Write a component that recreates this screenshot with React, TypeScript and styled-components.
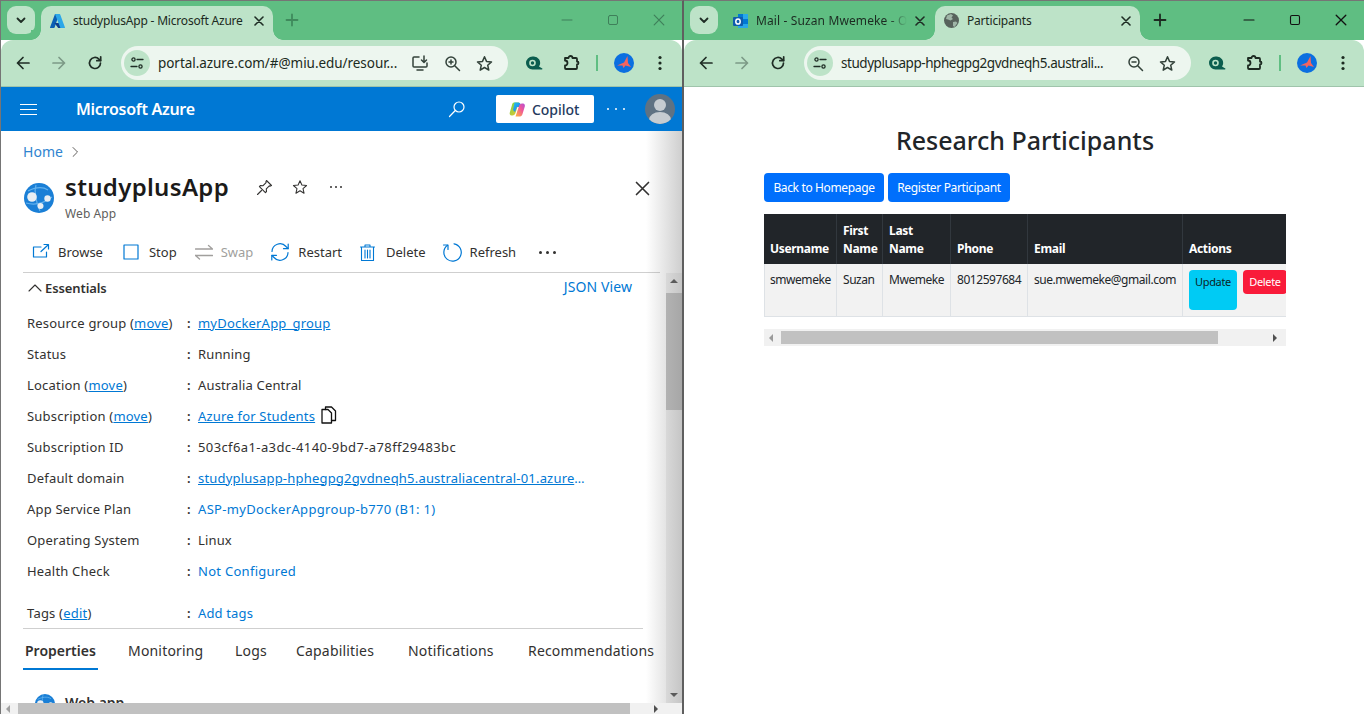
import React from 'react';
import styled, { createGlobalStyle } from 'styled-components';

const FONT = `"Noto Sans", "Open Sans", sans-serif`;

const Global = createGlobalStyle`
  html, body { margin: 0; padding: 0; overflow: hidden; background: #fff; }
  * { box-sizing: border-box; }
  body { font-family: ${FONT}; }
`;

const Screen = styled.div`
  width: 1364px;
  height: 714px;
  display: grid;
  grid-template-columns: 684px 680px;
  overflow: hidden;
`;

const Win = styled.div<{ $left?: boolean }>`
  display: flex;
  flex-direction: column;
  height: 714px;
  min-width: 0;
  border-top: 1px solid #757575;
  border-left: ${({ $left }) => ($left ? '1px solid #757575' : 'none')};
  border-right: ${({ $left }) => ($left ? '2px solid #5f5f5f' : 'none')};
`;

const TabStrip = styled.div`
  height: 39px;
  flex: none;
  background: #5fbe82;
  display: flex;
  align-items: flex-start;
  padding: 5px 0 0 6px;
`;

const TabMenu = styled.div`
  width: 28px;
  height: 28px;
  border-radius: 9px;
  background: #bde3c8;
  display: flex;
  align-items: center;
  justify-content: center;
  flex: none;
`;

const Tab = styled.div<{ $active?: boolean; $w: number; $ml: number }>`
  position: relative;
  width: ${({ $w }) => $w}px;
  height: 34px;
  margin-left: ${({ $ml }) => $ml}px;
  flex: none;
  display: flex;
  align-items: center;
  padding: 0 9px 5px 9px;
  gap: 8px;
  border-radius: 10px 10px 0 0;
  background: ${({ $active }) => ($active ? '#bde3c8' : 'transparent')};
  ${({ $active }) =>
    $active &&
    `
    &::before, &::after {
      content: '';
      position: absolute;
      bottom: 0;
      width: 10px;
      height: 10px;
      background: radial-gradient(circle at var(--cx) 0, #5fbe82 9.5px, #bde3c8 10px);
    }
    &::before { left: -10px; --cx: 0; }
    &::after { right: -10px; --cx: 100%; }
  `}
`;

const TabTitle = styled.span<{ $fade?: boolean }>`
  flex: 1;
  min-width: 0;
  font-size: 12px;
  color: #1c2a21;
  white-space: nowrap;
  overflow: hidden;
  letter-spacing: ${({ $fade }) => ($fade ? 0.12 : -0.2)}px;
  ${({ $fade }) =>
    $fade &&
    `-webkit-mask-image: linear-gradient(90deg, #000 88%, transparent 100%);
     mask-image: linear-gradient(90deg, #000 88%, transparent 100%);`}
`;

const NewTab = styled.div<{ $ml: number }>`
  width: 20px;
  height: 20px;
  margin: 4px 0 0 ${({ $ml }) => $ml}px;
  flex: none;
  display: flex;
  align-items: center;
  justify-content: center;
`;

const WinControls = styled.div`
  margin: -1px 0 0 auto;
  display: flex;
  flex: none;
`;

const WinBtn = styled.div`
  width: 46px;
  height: 30px;
  display: flex;
  align-items: center;
  justify-content: center;
`;

const Toolbar = styled.div`
  height: 47px;
  flex: none;
  background: #bde3c8;
  border-radius: 12px 12px 0 0;
  border-bottom: 1px solid #9fc4ab;
  display: flex;
  align-items: center;
  padding: 0 0 0 4px;
`;

const NavBtn = styled.div<{ $w?: number }>`
  width: ${({ $w }) => $w ?? 36}px;
  height: 32px;
  flex: none;
  display: flex;
  align-items: center;
  justify-content: center;
`;

const Omnibox = styled.div`
  width: 387px;
  height: 34px;
  margin: 0 8px 0 8px;
  flex: none;
  border-radius: 17px;
  background: #edf6ef;
  display: flex;
  align-items: center;
  padding: 0 8px 0 3px;
`;

const TuneWrap = styled.div`
  width: 26px;
  height: 26px;
  flex: none;
  border-radius: 50%;
  background: #bde3c8;
  display: flex;
  align-items: center;
  justify-content: center;
  margin-right: 8px;
`;

const Url = styled.span<{ $sp: number }>`
  flex: 1;
  min-width: 0;
  font-size: 13.5px;
  letter-spacing: ${({ $sp }) => $sp}px;
  color: #1c2a21;
  white-space: nowrap;
  overflow: hidden;
`;

const OmniIcon = styled.div`
  width: 32px;
  height: 28px;
  flex: none;
  display: flex;
  align-items: center;
  justify-content: center;
`;

const Divider = styled.div`
  width: 2px;
  height: 16px;
  flex: none;
  background: #5fbe82;
  margin: 0 8px 0 6px;
`;

/* Azure portal */
const Portal = styled.div`
  position: relative;
  flex: 1;
  min-height: 0;
  display: flex;
  flex-direction: column;
  background: #fff;
`;

const AzureBar = styled.div`
  height: 44px;
  flex: none;
  background: #0078d4;
  display: flex;
  align-items: center;
  color: #fff;
`;

const Burger = styled.div`
  width: 17px;
  height: 11px;
  margin-left: 19px;
  flex: none;
  border-top: 1px solid #fff;
  border-bottom: 1px solid #fff;
  display: flex;
  align-items: center;
  &::before { content: ''; display: block; width: 100%; height: 1px; background: #fff; }
`;

const Brand = styled.div`
  margin-left: 39px;
  font-size: 16px;
  font-weight: 600;
  letter-spacing: -0.28px;
  flex: 1;
`;

const Copilot = styled.div`
  width: 98px;
  height: 28px;
  margin: 0 13px 0 30px;
  background: #fff;
  border-radius: 2px;
  display: flex;
  align-items: center;
  gap: 6px;
  padding-left: 13px;
  font-size: 14px;
  font-weight: 500;
  color: #243a5e;
  letter-spacing: -0.05px;
`;

const BarDots = styled.div`
  width: 18px;
  flex: none;
  display: flex;
  justify-content: space-between;
  margin-right: 20px;
  & > i { width: 2px; height: 2px; border-radius: 50%; background: #fff; }
`;

const Avatar = styled.div`
  margin-right: 7px;
  width: 30px;
  height: 30px;
  flex: none;
`;

const PortalBody = styled.div`
  flex: 1;
  min-height: 0;
  display: flex;
  flex-direction: column;
  overflow: hidden;
`;

const Crumb = styled.div`
  height: 41px;
  flex: none;
  padding-left: 22px;
  display: flex;
  align-items: center;
  gap: 7px;
  font-size: 14px;
  letter-spacing: 0.05px;
  color: #2f84d0;
`;

const TitleRow = styled.div`
  height: 60px;
  flex: none;
  display: flex;
  align-items: flex-start;
  padding-left: 23px;
`;

const TitleIcon = styled.div`
  margin-top: 11px;
  width: 30px;
  flex: none;
`;

const TitleText = styled.div`
  margin: -1px 0 0 11px;
`;

const H = styled.div`
  font-size: 24px;
  line-height: 31px;
  font-weight: 600;
  color: #1b1a19;
  letter-spacing: 0.32px;
`;

const Sub = styled.div`
  font-size: 12px;
  line-height: 18px;
  margin-top: 3px;
  letter-spacing: 0.1px;
  color: #605e5c;
`;

const TitleActions = styled.div`
  display: flex;
  align-items: center;
  height: 32px;
  margin: -1px 0 0 27px;
  gap: 19px;
`;

const TitleDots = styled.div`
  width: 12px;
  margin-left: 3px;
  flex: none;
  display: flex;
  justify-content: space-between;
  & > i { width: 2px; height: 2px; border-radius: 50%; background: #323130; }
`;

const CloseBlade = styled.div`
  margin: 7px 31px 0 auto;
  width: 16px;
  height: 16px;
`;

const ActionBar = styled.div`
  height: 41px;
  flex: none;
  margin: 0 22px 0 22px;
  border-bottom: 1px solid #cfcfcf;
  display: flex;
  align-items: center;
`;

const Action = styled.div<{ $x: number; $gap: number; $off?: boolean }>`
  margin-left: ${({ $x }) => $x}px;
  display: flex;
  align-items: center;
  gap: ${({ $gap }) => $gap}px;
  font-size: 13px;
  color: ${({ $off }) => ($off ? '#a19f9d' : '#323130')};
  flex: none;
`;

const MoreDots = styled.div`
  width: 17px;
  display: flex;
  justify-content: space-between;
  & > i { width: 3px; height: 3px; border-radius: 50%; background: #323130; }
`;

const ScrollArea = styled.div`
  flex: 1;
  min-height: 0;
  overflow: hidden;
  padding: 0 0 0 22px;
`;

const EssHead = styled.div`
  height: 30px;
  display: flex;
  align-items: center;
  padding: 0 0 0 5px;
  width: 609px;
  gap: 3px;
  font-size: 13px;
  font-weight: 600;
  letter-spacing: -0.1px;
  color: #323130;
`;

const JsonLink = styled.span`
  margin: 0 0 3px auto;
  font-size: 14px;
  font-weight: 400;
  letter-spacing: 0.1px;
  color: #0078d4;
`;

const Rows = styled.div`
  margin-top: 4px;
  padding-left: 4px;
`;

const Row = styled.div<{ $h?: number; $mt?: number }>`
  display: grid;
  grid-template-columns: 160px 11px 1fr;
  align-items: center;
  height: ${({ $h }) => $h ?? 31}px;
  margin-top: ${({ $mt }) => $mt ?? 0}px;
  font-size: 13px;
  letter-spacing: 0.2px;
  color: #323130;
  white-space: nowrap;
`;

const Colon = styled.span`
  font-weight: 600;
`;

const A = styled.a`
  color: #0078d4;
  text-decoration: underline;
`;

const Plain = styled.span<{ $blue?: boolean; $sp?: number }>`
  color: ${({ $blue }) => ($blue ? '#0078d4' : '#323130')};
  letter-spacing: ${({ $sp }) => $sp ?? 0.15}px;
`;

const DomainLink = styled(A)`
  display: inline-block;
  vertical-align: bottom;
  max-width: 387px;
  overflow: hidden;
  text-overflow: ellipsis;
`;

const CopyIcon = styled.span`
  display: inline-flex;
  vertical-align: -3px;
  margin-left: 5px;
`;

const TabsRow = styled.div`
  width: 620px;
  border-top: 1px solid #cfcfcf;
  height: 42px;
  display: flex;
  align-items: flex-start;
  font-size: 14px;
  color: #323130;
  flex: none;
`;

const PTab = styled.div<{ $active?: boolean; $w: number }>`
  width: ${({ $w }) => $w}px;
  flex: none;
  height: 41px;
  padding: 12px 0 0 ${({ $active }) => ($active ? 2 : 0)}px;
  font-weight: ${({ $active }) => ($active ? 600 : 400)};
  letter-spacing: ${({ $active }) => ($active ? 0 : 0.18)}px;
  white-space: nowrap;
  color: #323130;
  border-bottom: ${({ $active }) => ($active ? '2px solid #0078d4' : 'none')};
`;

const WebApp = styled.div`
  margin: 24px 0 0 12px;
  display: flex;
  gap: 10px;
  align-items: flex-start;
  font-size: 14px;
  font-weight: 600;
  color: #323130;
  line-height: 18px;
`;

const Shade = styled.div`
  position: absolute;
  top: 44px;
  right: 0;
  bottom: 11px;
  width: 36px;
  pointer-events: none;
  background: linear-gradient(90deg, rgba(120,120,120,0), rgba(120,120,120,0.36));
`;

const VBar = styled.div`
  position: absolute;
  top: 186px;
  right: 0;
  bottom: 11px;
  width: 16px;
  background: #f1f1f1;
  display: flex;
  flex-direction: column;
  align-items: center;
  padding: 6px 0;
`;

const VThumb = styled.div`
  width: 16px;
  height: 117px;
  margin-top: 10px;
  background: #c1c1c1;
`;

const Spacer = styled.div`
  flex: 1;
`;

const Arrow = styled.i<{ $dir: 'up' | 'down' | 'left' | 'right'; $c?: string }>`
  display: block;
  width: 0;
  height: 0;
  flex: none;
  ${({ $dir, $c }) => {
    const c = $c ?? '#505050';
    if ($dir === 'up') return `border-left:4px solid transparent;border-right:4px solid transparent;border-bottom:4px solid ${c};`;
    if ($dir === 'down') return `border-left:4px solid transparent;border-right:4px solid transparent;border-top:4px solid ${c};`;
    if ($dir === 'left') return `border-top:4px solid transparent;border-bottom:4px solid transparent;border-right:4px solid ${c};`;
    return `border-top:4px solid transparent;border-bottom:4px solid transparent;border-left:4px solid ${c};`;
  }}
`;

const HBar = styled.div`
  height: 11px;
  flex: none;
  background: #f1f1f1;
  display: flex;
  align-items: center;
  padding-left: 5px;
  position: relative;
  z-index: 1;
`;

const HThumb = styled.div<{ $w: number; $ml: number; $mr: number; $h: number }>`
  width: ${({ $w }) => $w}px;
  height: ${({ $h }) => $h}px;
  margin: 0 ${({ $mr }) => $mr}px 0 ${({ $ml }) => $ml}px;
  background: #c1c1c1;
  flex: none;
`;

/* Participants page */
const Page = styled.div`
  flex: 1;
  min-height: 0;
  background: #fff;
  padding: 0 0 0 80px;
`;

const PageTitle = styled.h1`
  width: 522px;
  margin: 0;
  padding-top: 33px;
  height: 86px;
  font-size: 25px;
  line-height: 40px;
  font-weight: 500;
  text-align: center;
  color: #212529;
`;

const BtnRow = styled.div`
  display: flex;
  gap: 4px;
`;

const Btn = styled.button<{ $bg: string; $fg?: string; $w: number; $h: number }>`
  width: ${({ $w }) => $w}px;
  height: ${({ $h }) => $h}px;
  flex: none;
  padding: 0;
  border: none;
  border-radius: 4px;
  background: ${({ $bg }) => $bg};
  color: ${({ $fg }) => $fg ?? '#fff'};
  font-family: ${FONT};
  font-size: 12px;
  letter-spacing: -0.36px;
  white-space: nowrap;
`;

const TableWrap = styled.div`
  width: 522px;
  margin-top: 12px;
  overflow: hidden;
`;

const Table = styled.table`
  border-collapse: collapse;
  table-layout: fixed;
  width: 530px;
  font-size: 12px;
  line-height: 18px;
`;

const Th = styled.th<{ $w: number }>`
  width: ${({ $w }) => $w}px;
  background: #212529;
  color: #fff;
  font-weight: 700;
  text-align: left;
  vertical-align: bottom;
  padding: 7px 6px 6px;
  height: 50px;
  border: 1px solid #32383e;
  border-width: 0 1px 0 0;
  letter-spacing: -0.32px;
  &:first-child { border-left: 1px solid #212529; padding-left: 5px; }
`;

const Td = styled.td`
  background: #f2f2f2;
  color: #212529;
  vertical-align: top;
  padding: 7px 6px 6px;
  height: 52px;
  border: 1px solid #dee2e6;
  border-width: 0 1px 1px 0;
  white-space: nowrap;
  letter-spacing: -0.45px;
  &:first-child { border-left-width: 1px; padding-left: 5px; }
`;

const ActionCell = styled.div`
  display: flex;
  gap: 6px;
  align-items: flex-start;
  margin-top: -1px;
`;

const SmallBtn = styled(Btn)`
  font-size: 11px;
  display: flex;
  justify-content: center;
  padding-top: 3px;
  line-height: 18px;
`;

const TableScroll = styled.div`
  width: 522px;
  height: 17px;
  margin-top: 12px;
  background: #f1f1f1;
  display: flex;
  align-items: center;
  padding-left: 5px;
`;

/* Drawings */
const Stroke = ({ size = 16, color = '#1f2d25', w = 1.7, box = 16, children }: { size?: number; color?: string; w?: number; box?: number; children: React.ReactNode }) => (
  <svg width={size} height={size} viewBox={`0 0 ${box} ${box}`} fill="none" stroke={color} strokeWidth={w} strokeLinecap="round" strokeLinejoin="round">
    {children}
  </svg>
);

const Chevron = () => (
  <Stroke size={12} box={12} w={1.8}><path d="M2.5 4.5 6 8l3.5-3.5" /></Stroke>
);
const X = ({ color = '#1f2d25', size = 10, w = 1.6 }: { color?: string; size?: number; w?: number }) => (
  <Stroke size={size} box={10} color={color} w={w}><path d="M1 1l8 8M9 1l-8 8" /></Stroke>
);
const Plus = ({ color }: { color: string }) => (
  <Stroke size={14} box={14} color={color} w={1.8}><path d="M7 1.5v11M1.5 7h11" /></Stroke>
);
const Back = ({ color = '#1f2d25' }: { color?: string }) => (
  <Stroke color={color}><path d="M14 8H2.5M8 2.5 2.5 8 8 13.5" /></Stroke>
);
const Forward = ({ color = '#7c9a86' }: { color?: string }) => (
  <Stroke color={color}><path d="M2 8h11.5M8 2.5 13.5 8 8 13.5" /></Stroke>
);
const Reload = () => (
  <Stroke><path d="M13.5 8a5.5 5.5 0 1 1-1.6-3.9L13.5 5.5" /><path d="M13.7 1.8v3.9H9.8" /></Stroke>
);
const Tune = () => (
  <Stroke size={14} box={14} w={1.3}>
    <circle cx="3.5" cy="3.5" r="1.6" /><path d="M7 3.5h6M1 10.5h6" /><circle cx="10.5" cy="10.5" r="1.6" />
  </Stroke>
);
const Install = () => (
  <Stroke size={18} box={18} w={1.5} color="#33423a">
    <path d="M8 3H3a1 1 0 0 0-1 1v8a1 1 0 0 0 1 1h12a1 1 0 0 0 1-1V9" /><path d="M6 16h6M13 2v6M10.5 6 13 8.5 15.5 6" />
  </Stroke>
);
const Zoom = () => (
  <Stroke size={17} box={17} w={1.5} color="#33423a">
    <circle cx="7" cy="7" r="5" /><path d="M11 11l4.5 4.5M5 7h4M7 5v4" />
  </Stroke>
);
const ZoomOut = () => (
  <Stroke size={17} box={17} w={1.5} color="#33423a">
    <circle cx="7" cy="7" r="5" /><path d="M11 11l4.5 4.5M5 7h4" />
  </Stroke>
);
const Star = ({ color = '#33423a', size = 17, w = 1.5 }: { color?: string; size?: number; w?: number }) => (
  <Stroke size={size} box={17} w={w} color={color}>
    <path d="M8.5 1.8 10.5 6.4l5 .5-3.8 3.3 1.1 4.9-4.3-2.6-4.3 2.6 1.1-4.9L1.5 6.9l5-.5z" />
  </Stroke>
);
const ExtCam = () => (
  <svg width="18" height="14" viewBox="0 0 18 14">
    <path d="M7.500 0.500a6.500 6.500 0 1 0 0 13h9.500a.6.6 0 0 0 .3-1L14 10.500A6.500 6.500 0 0 0 7.500 0.500z" fill="#0b5d4e" />
    <circle cx="7.500" cy="7" r="3.300" fill="#bde3c8" />
    <circle cx="7.500" cy="7" r="1.700" fill="#0b5d4e" />
  </svg>
);
const Puzzle = () => (
  <svg width="17" height="16" viewBox="0 0 17 16" fill="none" stroke="#1c2a21" strokeWidth="1.800" strokeLinejoin="round">
    <path d="M2 3h3.500a2 2 0 0 1 4 0H13a1 1 0 0 1 1 1v2.500a1.500 1.500 0 0 1 0 3V13a1 1 0 0 1-1 1H3a1 1 0 0 1-1-1v-2.500a2.500 2.500 0 0 0 0-5z" />
  </svg>
);
const Profile = () => (
  <svg width="20" height="20" viewBox="0 0 20 20">
    <circle cx="10" cy="10" r="10" fill="#0b6fe0" />
    <path d="M3 12.500 10 9.500 13.500 3l.5 7 3 4-5.500-1.500L9.500 15l-1-2.500z" fill="#f3645f" />
  </svg>
);
const Kebab = () => (
  <svg width="4" height="16" viewBox="0 0 4 16" fill="#1c2a21">
    <circle cx="2" cy="2.500" r="1.600" /><circle cx="2" cy="8" r="1.600" /><circle cx="2" cy="13.500" r="1.600" />
  </svg>
);
const AzureLogo = () => (
  <svg width="15" height="14" viewBox="0 0 15 14">
    <path d="M5 0h4.200L4.600 13.500a.7.700 0 0 1-.6.500H.6a.5.500 0 0 1-.5-.7z" fill="#0a5fb4" />
    <path d="M11.200 9H4.400l3.800 5h4.600z" fill="#0f3f8c" />
    <path d="M5 0h4.600a.7.700 0 0 1 .6.500l4.700 12.800a.5.500 0 0 1-.5.700h-4z" fill="#2ba7e8" />
  </svg>
);
const OutlookLogo = () => (
  <svg width="15" height="16" viewBox="0 0 15 16">
    <rect x="5" y="1" width="10" height="14" fill="#28a8ea" />
    <rect x="5" y="1" width="5" height="5" fill="#0078d4" />
    <rect x="10" y="6" width="5" height="5" fill="#0078d4" />
    <rect x="0" y="4" width="10" height="9" rx="1" fill="#0f5cad" />
    <ellipse cx="5" cy="8.500" rx="2.200" ry="2.600" fill="none" stroke="#fff" strokeWidth="1.500" />
  </svg>
);
const GlobeIcon = () => (
  <svg width="15" height="15" viewBox="0 0 15 15">
    <circle cx="7.500" cy="7.500" r="7.500" fill="#57635c" />
    <path d="M3 2.500 7 1l2 1.500L7.500 4.500 9 6 6.500 7.500 4 6.500 2 6zM9 9l3-.5 1.500 1.500-3 4-1.500-1z" fill="#9fb6a7" />
  </svg>
);
const Search = () => (
  <Stroke size={18} box={18} color="#fff" w={1.2}>
    <circle cx="11" cy="7" r="5" /><path d="M7.300 10.500 1.500 16.500" />
  </Stroke>
);
const CopilotIcon = () => (
  <svg width="17" height="17" viewBox="0 0 17 17">
    <defs>
      <linearGradient id="cpa" x1="0" y1="0" x2="1" y2="1"><stop offset="0" stopColor="#19c3f0" /><stop offset="1" stopColor="#2d6be4" /></linearGradient>
      <linearGradient id="cpb" x1="0" y1="1" x2="1" y2="0"><stop offset="0" stopColor="#ffb638" /><stop offset=".6" stopColor="#f0569a" /><stop offset="1" stopColor="#b04fd6" /></linearGradient>
      <linearGradient id="cpc" x1="0" y1="0" x2="1" y2="1"><stop offset="0" stopColor="#6fd34b" /><stop offset="1" stopColor="#f5c62e" /></linearGradient>
    </defs>
    <path d="M5 1.500h5L6.500 12c-.5 1.500-1.500 2.500-3 2.500H2.500C1 14.500.300 13 .800 11.500L3 4c.3-1.500 1-2.500 2-2.500z" fill="url(#cpc)" />
    <path d="M5.500 1.500h4c1 0 2 .8 2.200 2L12.500 6H8L6 11 4 9l1-5z" fill="url(#cpa)" />
    <path d="M11 15.500H6.500L10 5c.5-1.500 1.500-2.500 3-2.500h1c1.500 0 2.200 1.500 1.800 3L13.500 13c-.4 1.500-1.300 2.500-2.500 2.500z" fill="url(#cpb)" />
  </svg>
);
const AvatarIcon = () => (
  <svg width="30" height="30" viewBox="0 0 30 30">
    <defs><clipPath id="av"><circle cx="15" cy="15" r="15" /></clipPath></defs>
    <circle cx="15" cy="15" r="15" fill="#5f7283" />
    <g clipPath="url(#av)" fill="#c6ccd1">
      <circle cx="15" cy="11" r="6" />
      <ellipse cx="15" cy="26" rx="11" ry="8" />
    </g>
  </svg>
);
const WebAppIcon = ({ size = 30 }: { size?: number }) => (
  <svg width={size} height={size} viewBox="0 0 30 30">
    <circle cx="15" cy="15" r="15" fill="#1a7fd6" />
    <path d="M4 8c6-3 14-5 20-1M12 2c-2 6-1 14 4 26M2 20c7 2 17 1 26-6" stroke="#63b2ee" strokeWidth="1.200" fill="none" />
    <circle cx="8" cy="14" r="4.800" fill="#e8eef3" />
    <circle cx="23.500" cy="15.500" r="3.200" fill="#e8eef3" />
    <circle cx="16.500" cy="23" r="3" fill="#e8eef3" />
  </svg>
);
const Pin = () => (
  <Stroke size={17} box={17} color="#323130" w={1.100}>
    <path d="M10.500 1.500l5 5-1.200.6-1-.2-3 3 .2 2.600-1.100 1.100-6-6 1.100-1.100 2.600.2 3-3-.2-1z" /><path d="M5.500 11.500 1.500 15.500" />
  </Stroke>
);
const BrowseIcon = () => (
  <Stroke size={18} box={18} color="#0078d4" w={1.200}>
    <path d="M9 4H1.500v10h13V9" /><path d="M9 8.500 16 2M12 1.500h4.500V6" />
  </Stroke>
);
const SwapIcon = () => (
  <Stroke size={18} box={18} color="#a19f9d" w={1.300}>
    <path d="M0.500 6h17M13.500 2.500 17.500 6M0.500 12.500h17M4.500 16 .5 12.500" />
  </Stroke>
);
const RestartIcon = () => (
  <Stroke size={20} box={20} color="#0078d4" w={1.200}>
    <path d="M2 9.500a8 8 0 0 1 14-5l2 2M18 10.500a8 8 0 0 1-14 5l-2-2" /><path d="M18.200 2v4.700h-4.700M1.800 18v-4.700h4.700" />
  </Stroke>
);
const TrashIcon = () => (
  <Stroke size={17} box={17} color="#0078d4" w={1.100}>
    <path d="M1.500 3h14M6 3V1h5v2M2.500 3v13.500h12V3M6 6v8M8.500 6v8M11 6v8" />
  </Stroke>
);
const RefreshIcon = () => (
  <Stroke size={20} box={20} color="#0078d4" w={1.200}>
    <path d="M5.500 3.300A8.700 8.700 0 1 0 12 1.800" /><path d="M6 7.500V3H1.500" />
  </Stroke>
);
const CopyDraw = () => (
  <Stroke size={18} box={18} color="#111" w={1.300}>
    <path d="M5.500 3.500V1h6l4 4v9.500h-4" /><path d="M2 3.500h6l3.500 3.500v10H2z" />
  </Stroke>
);
const UpChevron = () => (
  <Stroke size={14} box={14} color="#323130" w={1.100}><path d="M1 10 7 4l6 6" /></Stroke>
);
const CrumbChevron = () => (
  <Stroke size={10} box={10} color="#605e5c" w={1}><path d="M3 0.500 7.500 5 3 9.500" /></Stroke>
);

const ToolbarRight = () => (
  <>
    <NavBtn $w={36}><ExtCam /></NavBtn>
    <NavBtn $w={38}><Puzzle /></NavBtn>
    <Divider />
    <NavBtn $w={36}><Profile /></NavBtn>
    <NavBtn $w={36}><Kebab /></NavBtn>
  </>
);

const App: React.FC = () => (
  <>
    <Global />
    <Screen>
      <Win $left>
        <TabStrip>
          <TabMenu><Chevron /></TabMenu>
          <Tab $active $w={232} $ml={6}>
            <AzureLogo />
            <TabTitle>studyplusApp - Microsoft Azure</TabTitle>
            <X />
          </Tab>
          <NewTab $ml={9}><Plus color="#3f8a5c" /></NewTab>
          <WinControls>
            <WinBtn><Stroke size={12} box={12} color="#3f7f5a" w={1}><path d="M1 6h10" /></Stroke></WinBtn>
            <WinBtn><Stroke size={12} box={12} color="#3f7f5a" w={1}><rect x="1.500" y="1.500" width="9" height="9" rx="1.500" /></Stroke></WinBtn>
            <WinBtn><X color="#3f7f5a" size={12} w={1} /></WinBtn>
          </WinControls>
        </TabStrip>
        <Toolbar>
          <NavBtn><Back /></NavBtn>
          <NavBtn><Forward /></NavBtn>
          <NavBtn><Reload /></NavBtn>
          <Omnibox>
            <TuneWrap><Tune /></TuneWrap>
            <Url $sp={-0.05}>portal.azure.com/#@miu.edu/resour...</Url>
            <OmniIcon><Install /></OmniIcon>
            <OmniIcon><Zoom /></OmniIcon>
            <OmniIcon><Star /></OmniIcon>
          </Omnibox>
          <ToolbarRight />
        </Toolbar>
        <Portal>
          <AzureBar>
            <Burger />
            <Brand>Microsoft Azure</Brand>
            <Search />
            <Copilot><CopilotIcon />Copilot</Copilot>
            <BarDots><i /><i /><i /></BarDots>
            <Avatar><AvatarIcon /></Avatar>
          </AzureBar>
          <PortalBody>
            <Crumb>Home <CrumbChevron /></Crumb>
            <TitleRow>
              <TitleIcon><WebAppIcon /></TitleIcon>
              <TitleText>
                <H>studyplusApp</H>
                <Sub>Web App</Sub>
              </TitleText>
              <TitleActions>
                <Pin />
                <Star color="#323130" size={16} w={1.100} />
                <TitleDots><i /><i /><i /></TitleDots>
              </TitleActions>
              <CloseBlade><X color="#323130" size={15} w={1.100} /></CloseBlade>
            </TitleRow>
            <ActionBar>
              <Action $x={9} $gap={8}><BrowseIcon />Browse</Action>
              <Action $x={20} $gap={10}>
                <Stroke size={16} box={16} color="#0078d4" w={1.200}><rect x="1" y="1" width="14" height="14" /></Stroke>
                Stop
              </Action>
              <Action $x={18} $gap={8} $off><SwapIcon />Swap</Action>
              <Action $x={17} $gap={8}><RestartIcon />Restart</Action>
              <Action $x={17} $gap={10}><TrashIcon />Delete</Action>
              <Action $x={16} $gap={8}><RefreshIcon />Refresh</Action>
              <Action $x={23} $gap={0}><MoreDots><i /><i /><i /></MoreDots></Action>
            </ActionBar>
            <ScrollArea>
              <EssHead>
                <UpChevron />Essentials
                <JsonLink>JSON View</JsonLink>
              </EssHead>
              <Rows>
                <Row><span>Resource group (<A>move</A>)</span><Colon>:</Colon><span><A>myDockerApp_group</A></span></Row>
                <Row><span>Status</span><Colon>:</Colon><Plain>Running</Plain></Row>
                <Row><span>Location (<A>move</A>)</span><Colon>:</Colon><Plain>Australia Central</Plain></Row>
                <Row><span>Subscription (<A>move</A>)</span><Colon>:</Colon><span><A>Azure for Students</A><CopyIcon><CopyDraw /></CopyIcon></span></Row>
                <Row><span>Subscription ID</span><Colon>:</Colon><Plain $sp={0.39}>503cf6a1-a3dc-4140-9bd7-a78ff29483bc</Plain></Row>
                <Row><span>Default domain</span><Colon>:</Colon><span><DomainLink>studyplusapp-hphegpg2gvdneqh5.australiacentral-01.azurewebsites.net</DomainLink></span></Row>
                <Row><span>App Service Plan</span><Colon>:</Colon><Plain $blue $sp={0.33}>ASP-myDockerAppgroup-b770 (B1: 1)</Plain></Row>
                <Row><span>Operating System</span><Colon>:</Colon><Plain>Linux</Plain></Row>
                <Row><span>Health Check</span><Colon>:</Colon><Plain $blue $sp={0.28}>Not Configured</Plain></Row>
                <Row $mt={12} $h={30}><span>Tags (<A>edit</A>)</span><Colon>:</Colon><Plain $blue>Add tags</Plain></Row>
              </Rows>
              <TabsRow>
                <PTab $active $w={75}>Properties</PTab>
                <PTab $w={30} />
                <PTab $w={107}>Monitoring</PTab>
                <PTab $w={61}>Logs</PTab>
                <PTab $w={112}>Capabilities</PTab>
                <PTab $w={120}>Notifications</PTab>
                <PTab $w={126}>Recommendations</PTab>
              </TabsRow>
              <WebApp><WebAppIcon size={20} />Web app</WebApp>
            </ScrollArea>
          </PortalBody>
          <HBar>
            <Arrow $dir="left" $c="#a0a0a0" />
            <HThumb $w={612} $ml={8} $mr={24} $h={11} />
            <Arrow $dir="right" />
          </HBar>
          <VBar>
            <Arrow $dir="up" />
            <VThumb />
            <Spacer />
            <Arrow $dir="down" />
          </VBar>
          <Shade />
        </Portal>
      </Win>
      <Win>
        <TabStrip>
          <TabMenu><Chevron /></TabMenu>
          <Tab $w={210} $ml={6}>
            <OutlookLogo />
            <TabTitle $fade>Mail - Suzan Mwemeke - Outlook</TabTitle>
            <X />
          </Tab>
          <Tab $active $w={205} $ml={1}>
            <GlobeIcon />
            <TabTitle>Participants</TabTitle>
            <X />
          </Tab>
          <NewTab $ml={10}><Plus color="#1c2a21" /></NewTab>
          <WinControls>
            <WinBtn><Stroke size={12} box={12} color="#111" w={1.100}><path d="M1 6h10" /></Stroke></WinBtn>
            <WinBtn><Stroke size={12} box={12} color="#111" w={1.100}><rect x="1.500" y="1.500" width="9" height="9" rx="1.500" /></Stroke></WinBtn>
            <WinBtn><X color="#111" size={12} w={1.100} /></WinBtn>
          </WinControls>
        </TabStrip>
        <Toolbar>
          <NavBtn><Back /></NavBtn>
          <NavBtn><Forward /></NavBtn>
          <NavBtn><Reload /></NavBtn>
          <Omnibox>
            <TuneWrap><Tune /></TuneWrap>
            <Url $sp={-0.45}>studyplusapp-hphegpg2gvdneqh5.australi...</Url>
            <OmniIcon><ZoomOut /></OmniIcon>
            <OmniIcon><Star /></OmniIcon>
          </Omnibox>
          <ToolbarRight />
        </Toolbar>
        <Page>
          <PageTitle>Research Participants</PageTitle>
          <BtnRow>
            <Btn $bg="#006ffc" $w={120} $h={29}>Back to Homepage</Btn>
            <Btn $bg="#006ffc" $w={122} $h={29}>Register Participant</Btn>
          </BtnRow>
          <TableWrap>
            <Table>
              <thead>
                <tr>
                  <Th $w={72}>Username</Th>
                  <Th $w={46}>First Name</Th>
                  <Th $w={68}>Last Name</Th>
                  <Th $w={77}>Phone</Th>
                  <Th $w={155}>Email</Th>
                  <Th $w={112}>Actions</Th>
                </tr>
              </thead>
              <tbody>
                <tr>
                  <Td>smwemeke</Td>
                  <Td>Suzan</Td>
                  <Td>Mwemeke</Td>
                  <Td>8012597684</Td>
                  <Td>sue.mwemeke@gmail.com</Td>
                  <Td>
                    <ActionCell>
                      <SmallBtn $bg="#00cbf4" $fg="#0b1f28" $w={48} $h={40}>Update</SmallBtn>
                      <SmallBtn $bg="#f91b3a" $w={44} $h={24}>Delete</SmallBtn>
                    </ActionCell>
                  </Td>
                </tr>
              </tbody>
            </Table>
          </TableWrap>
          <TableScroll>
            <Arrow $dir="left" $c="#9a9a9a" />
            <HThumb $w={437} $ml={8} $mr={55} $h={13} />
            <Arrow $dir="right" />
          </TableScroll>
        </Page>
      </Win>
    </Screen>
  </>
);

export default App;
